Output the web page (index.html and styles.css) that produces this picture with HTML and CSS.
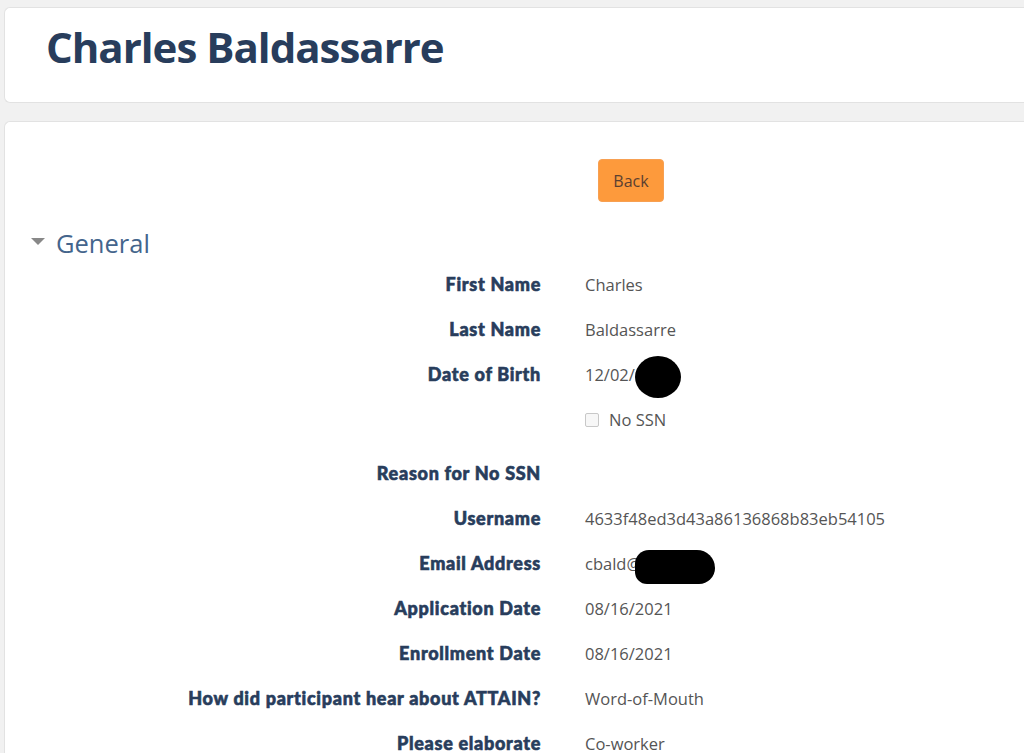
FILE: index.html
```html
<!DOCTYPE html>
<html>
<head>
<meta charset="utf-8">
<link rel="stylesheet" href="styles.css">
</head>
<body>
<div class="card header-card">
  <h1 class="title">Charles Baldassarre</h1>
</div>
<div class="card main-card">
  <div class="actions"><button class="btn-back">Back</button></div>
  <div class="section-head">
    <span class="caret"></span>
    <h2 class="section-title">General</h2>
  </div>
  <div class="fields">
    <div class="label">First Name</div><div class="value">Charles</div>
    <div class="label">Last Name</div><div class="value">Baldassarre</div>
    <div class="label">Date of Birth</div><div class="value">12/02/<span class="blot blot-dob"></span></div>
    <div class="label"></div><div class="value check-row"><span class="checkbox"></span>No SSN</div>
    <div class="label tall">Reason for No SSN</div><div class="value tall"></div>
    <div class="label">Username</div><div class="value">4633f48ed3d43a86136868b83eb54105</div>
    <div class="label">Email Address</div><div class="value">cbald@<span class="blot blot-mail"></span></div>
    <div class="label">Application Date</div><div class="value">08/16/2021</div>
    <div class="label">Enrollment Date</div><div class="value">08/16/2021</div>
    <div class="label">How did participant hear about ATTAIN?</div><div class="value">Word-of-Mouth</div>
    <div class="label">Please elaborate</div><div class="value">Co-worker</div>
  </div>
</div>
</body>
</html>
```
FILE: styles.css
```css
html, body {
  margin: 0;
  padding: 0;
  background: #f1f1f1;
  overflow: hidden;
}
body {
  padding: 7px 0 0 4px;
  font-family: "Open Sans", "Noto Sans", sans-serif;
}
.card {
  background: #fff;
  border: 1px solid #e2e2e2;
  border-right: none;
  border-radius: 6px 0 0 6px;
}
.header-card {
  height: 96px;
  box-sizing: border-box;
  padding: 0 0 0 41px;
}
.title {
  margin: 0;
  padding-top: 14px;
  font-size: 42px;
  line-height: 50px;
  font-weight: 700;
  color: #283d5c;
  letter-spacing: -1px;
}
.main-card {
  margin-top: 18px;
  min-height: 700px;
  padding-top: 37px;
}
.actions {
  display: flex;
  padding-left: 593px;
}
.btn-back {
  width: 66px;
  height: 43px;
  background: #fd9a3c;
  border: 1px solid #f7a052;
  border-radius: 4px;
  color: #5b4030;
  font-family: "Open Sans", sans-serif;
  font-size: 16px;
  padding: 0;
}
.section-head {
  display: flex;
  align-items: center;
  margin-top: 23px;
  padding-left: 26px;
  height: 36px;
}
.caret {
  width: 0;
  height: 0;
  border-left: 7px solid transparent;
  border-right: 7px solid transparent;
  border-top: 7px solid #888;
  margin-right: 11px;
  margin-top: -3px;
}
.section-title {
  margin: 0;
  font-size: 25.5px;
  font-weight: 400;
  color: #44658c;
}
.fields {
  display: grid;
  grid-template-columns: 536px auto;
  column-gap: 44px;
  row-gap: 0;
  margin-top: 1px;
}
.label {
  text-align: right;
  font-family: "Lato", sans-serif;
  font-weight: 900;
  font-size: 18px;
  letter-spacing: 0.7px;
  -webkit-text-stroke: 0.6px #283d5c;
  color: #283d5c;
  height: 45px;
  line-height: 45px;
  white-space: nowrap;
}
.value {
  font-size: 16.5px;
  color: #555;
  height: 45px;
  line-height: 45px;
  white-space: nowrap;
}
.tall {
  height: 54px;
  padding-top: 9px;
  box-sizing: border-box;
}
.check-row {
  display: flex;
  align-items: center;
}
.checkbox {
  width: 12px;
  height: 12px;
  border: 1px solid #c8c8c8;
  border-radius: 2px;
  background: #f7f7f7;
  margin-right: 10px;
}
.blot {
  display: inline-block;
  background: #000;
  vertical-align: middle;
}
.blot-dob {
  width: 46px;
  height: 42px;
  border-radius: 50%;
  margin-left: 0;
}
.blot-mail {
  width: 80px;
  height: 34px;
  border-radius: 14px 18px 16px 12px;
  margin-left: -6px;
  margin-top: 2px;
}
```
